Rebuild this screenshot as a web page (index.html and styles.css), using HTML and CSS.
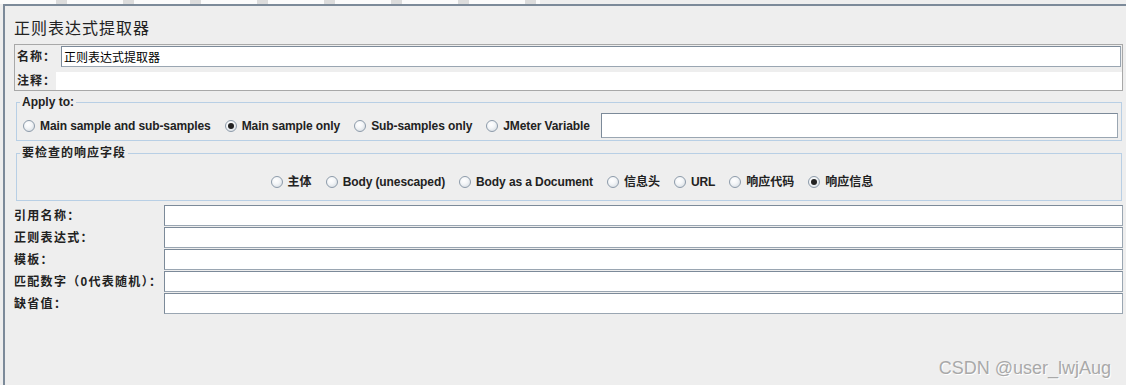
FILE: index.html
```
<!DOCTYPE html>
<html>
<head>
    <meta charset="utf-8" />
    <title>正则表达式提取器</title>
    <link rel="stylesheet" href="styles.css">
</head>
<body>
    <div class="tabs"></div>
    <div class="panel">
        <h1 class="title">正则表达式提取器</h1>

        <!--名称和注释-->
        <div class="namebox">
            <div class="name-row">
                <label>名称：</label>
                <input class="field" type="text" value="正则表达式提取器" />
            </div>
            <div class="comment-row">
                <label>注释：</label>
                <div class="comment"></div>
            </div>
        </div>

        <fieldset class="group apply">
            <legend>Apply to:</legend>
            <div class="radios">
                <span class="opt"><span class="radio"></span>Main sample and sub-samples</span>
                <span class="opt"><span class="radio on"></span>Main sample only</span>
                <span class="opt"><span class="radio"></span>Sub-samples only</span>
                <span class="opt"><span class="radio"></span>JMeter Variable</span>
                <input class="field var" type="text" />
            </div>
        </fieldset>

        <fieldset class="group check">
            <legend>要检查的响应字段</legend>
            <div class="radios center">
                <span class="opt cjk"><span class="radio"></span>主体</span>
                <span class="opt"><span class="radio"></span>Body (unescaped)</span>
                <span class="opt"><span class="radio"></span>Body as a Document</span>
                <span class="opt cjk"><span class="radio"></span>信息头</span>
                <span class="opt"><span class="radio"></span>URL</span>
                <span class="opt cjk"><span class="radio"></span>响应代码</span>
                <span class="opt cjk"><span class="radio on"></span>响应信息</span>
            </div>
        </fieldset>

        <div class="form">
            <div class="row"><label>引用名称：</label><input class="field" type="text" /></div>
            <div class="row"><label>正则表达式：</label><input class="field" type="text" /></div>
            <div class="row"><label>模板：</label><input class="field" type="text" /></div>
            <div class="row"><label>匹配数字（0代表随机）：</label><input class="field" type="text" /></div>
            <div class="row"><label>缺省值：</label><input class="field" type="text" /></div>
        </div>
    </div>
    <div class="watermark">CSDN @user_lwjAug</div>
</body>
</html>
```

FILE: styles.css
```
body,
div,
h1,
fieldset,
legend
{
    margin: 0;
    padding: 0;
}

body
{
    background: #eeeeee;
    color: #222;
    font: bold 12px/16px "Liberation Sans", "Noto Sans CJK SC", sans-serif;
    height: 385px;
    overflow: hidden;
    position: relative;
}

.tabs
{
    width: 540px;
    height: 4px;
    background: repeating-linear-gradient(90deg, #fbfbfb 0, #fbfbfb 56px, #dcdcdc 56px, #dcdcdc 67px);
}

.panel
{
    margin-left: 3px;
    height: 379px;
    border-left: 2px solid #7c8a99;
    border-top: 2px solid #7c8a99;
    padding: 0 3px 0 9px;
}

.title
{
    margin-top: 11px;
    font: normal 16px/20px "Noto Sans CJK SC", sans-serif;
    letter-spacing: 1px;
    color: #222;
}

.field
{
    box-sizing: border-box;
    height: 21px;
    margin: 0;
    padding: 0 2px;
    border: 1px solid #7c8a99;
    border-right-color: #9aa6b2;
    border-bottom-color: #9aa6b2;
    background: #fff;
    font: normal 12px "Noto Sans CJK SC", sans-serif;
    color: #000;
    outline: none;
}

/* 名称和注释 */
.namebox
{
    margin-top: 7px;
    border: 1px solid #a8a8a8;
    padding: 1px 0 0 1px;
}

    .namebox label
    {
        width: 44px;
        padding-left: 1px;
        letter-spacing: 1px;
    }

    .name-row
    {
        display: flex;
        align-items: center;
    }

        .name-row .field
        {
            flex: 1;
            margin-right: 1px;
        }

    .comment-row
    {
        display: flex;
        align-items: center;
        margin-top: 5px;
        height: 18px;
    }

        .comment-row label
        {
            width: 39px;
        }

    .comment
    {
        flex: 1;
        height: 18px;
        background: #fff;
    }

/* 分组框 */
.group
{
    margin: 4px 1px 0 2px;
    border: 1px solid #b8cfe5;
    padding: 4px 0 2px 3px;
    min-width: 0;
}

    .group legend
    {
        padding: 0 2px;
        line-height: 14px;
    }

.check
{
    margin-top: 5px;
    padding: 14px 0 10px 3px;
}

    .check legend
    {
        letter-spacing: 1px;
    }

.radios
{
    display: flex;
    align-items: center;
    margin-left: 3px;
    gap: 14px;
}

    .radios.center
    {
        justify-content: center;
        gap: 14px;
    }

.opt
{
    display: flex;
    align-items: center;
    gap: 5px;
    white-space: nowrap;
    letter-spacing: -0.1px;
}

    .opt.cjk
    {
        letter-spacing: 0;
    }

.radio
{
    box-sizing: border-box;
    width: 12px;
    height: 12px;
    border-radius: 50%;
    border: 1px solid #8d9baa;
    background: radial-gradient(circle at 40% 35%, #ffffff 0, #f4f6f8 40%, #cfd6dd 100%);
    display: flex;
    align-items: center;
    justify-content: center;
}

    .radio.on::after
    {
        content: "";
        width: 6px;
        height: 6px;
        border-radius: 50%;
        background: #222;
    }

.var
{
    flex: 1;
    height: 25px;
    margin: 0 3px 0 -3px;
}

/* 下方的表单 */
.form
{
    margin-top: 4px;
    display: flex;
    flex-direction: column;
    gap: 1px;
}

    .form .row
    {
        display: flex;
        align-items: center;
    }

        .form .row label
        {
            width: 150px;
            letter-spacing: 1.3px;
        }

        .form .row .field
        {
            flex: 1;
        }

.watermark
{
    position: absolute;
    right: 15px;
    bottom: 6px;
    font: normal 18px/22px "Liberation Sans", sans-serif;
    color: #a9a9a9;
    text-shadow: 1px 1px 0 #fff;
}
```
